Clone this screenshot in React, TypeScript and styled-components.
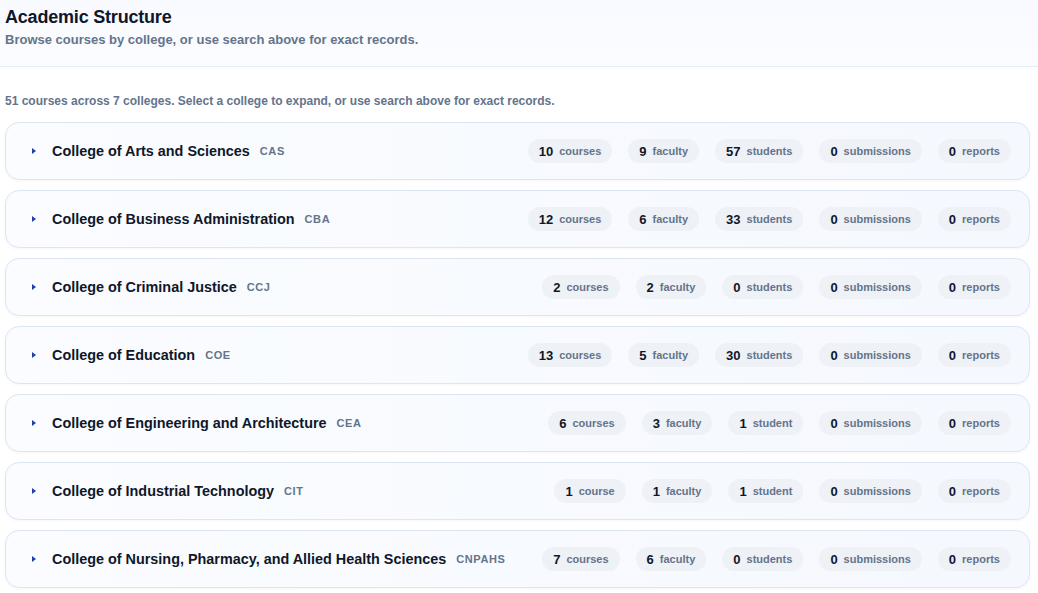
import React from 'react'
import styled, { createGlobalStyle } from 'styled-components'

type College = {
  name: string
  code: string
  courses: number
  faculty: number
  students: number
  submissions: number
  reports: number
}

const COLLEGES: College[] = [
  { name: 'College of Arts and Sciences', code: 'CAS', courses: 10, faculty: 9, students: 57, submissions: 0, reports: 0 },
  { name: 'College of Business Administration', code: 'CBA', courses: 12, faculty: 6, students: 33, submissions: 0, reports: 0 },
  { name: 'College of Criminal Justice', code: 'CCJ', courses: 2, faculty: 2, students: 0, submissions: 0, reports: 0 },
  { name: 'College of Education', code: 'COE', courses: 13, faculty: 5, students: 30, submissions: 0, reports: 0 },
  { name: 'College of Engineering and Architecture', code: 'CEA', courses: 6, faculty: 3, students: 1, submissions: 0, reports: 0 },
  { name: 'College of Industrial Technology', code: 'CIT', courses: 1, faculty: 1, students: 1, submissions: 0, reports: 0 },
  { name: 'College of Nursing, Pharmacy, and Allied Health Sciences', code: 'CNPAHS', courses: 7, faculty: 6, students: 0, submissions: 0, reports: 0 },
]

function plural(count: number, word: string, many?: string) {
  if (count === 1) return word
  return many ?? word + 's'
}

const GlobalStyle = createGlobalStyle`
  body {
    margin: 0;
    background: #ffffff;
    font-family: "Liberation Sans", Arial, sans-serif;
    color: #0f172a;
  }
`

const Stat: React.FC<{ value: number; label: string }> = ({ value, label }) => (
  <Pill>
    <PillValue>{value}</PillValue>
    <PillLabel>{label}</PillLabel>
  </Pill>
)

const App: React.FC = () => {
  const totalCourses = COLLEGES.reduce((sum, c) => sum + c.courses, 0)

  return (
    <>
      <GlobalStyle />
      <Page>
        <Header>
          <Title>Academic Structure</Title>
          <Subtitle>Browse courses by college, or use search above for exact records.</Subtitle>
        </Header>
        <Body>
          <Summary>
            {totalCourses} courses across {COLLEGES.length} colleges. Select a college to expand, or use
            search above for exact records.
          </Summary>
          <List>
            {COLLEGES.map((college) => (
              <Card key={college.code}>
                <Caret viewBox="0 0 4 6" aria-hidden>
                  <path d="M0 0 L4 3 L0 6 Z" fill="#1e40af" />
                </Caret>
                <Name>{college.name}</Name>
                <Code>{college.code}</Code>
                <Stats>
                  <Stat value={college.courses} label={plural(college.courses, 'course')} />
                  <Stat value={college.faculty} label="faculty" />
                  <Stat value={college.students} label={plural(college.students, 'student')} />
                  <Stat value={college.submissions} label={plural(college.submissions, 'submission')} />
                  <Stat value={college.reports} label={plural(college.reports, 'report')} />
                </Stats>
              </Card>
            ))}
          </List>
        </Body>
      </Page>
    </>
  )
}

export default App

const Page = styled.div`
  min-height: 100vh;
`

const Header = styled.header`
  padding: 6px 8px 17px 5px;
  background: linear-gradient(180deg, #f8faff 0%, #fbfcff 100%);
  border-bottom: 1px solid #e6edf6;
`

const Title = styled.h1`
  margin: 0;
  font-size: 18px;
  line-height: 22px;
  font-weight: 700;
  color: #0f172a;
  letter-spacing: -0.2px;
`

const Subtitle = styled.p`
  margin: 3px 0 0;
  font-size: 13px;
  line-height: 18px;
  font-weight: 700;
  color: #64748b;
`

const Body = styled.div`
  padding: 26px 8px 0 5px;
`

const Summary = styled.p`
  margin: 0 0 13px;
  font-size: 12px;
  line-height: 16px;
  font-weight: 700;
  color: #64748b;
`

const List = styled.div`
  display: flex;
  flex-direction: column;
  gap: 10px;
`

const Card = styled.div`
  display: flex;
  align-items: center;
  height: 58px;
  box-sizing: border-box;
  padding: 0 18px 0 26px;
  border: 1px solid #dbe5f3;
  border-radius: 14px;
  background: linear-gradient(90deg, #fafcff 0%, #f5f8fe 100%);
  box-shadow: 0 1px 3px rgba(15, 23, 42, 0.04);
`

const Caret = styled.svg`
  width: 4px;
  height: 6px;
  flex: none;
  margin-right: 16px;
`

const Name = styled.span`
  font-size: 14.4px;
  font-weight: 700;
  color: #0f172a;
`

const Code = styled.span`
  margin-left: 10px;
  font-size: 11px;
  font-weight: 700;
  letter-spacing: 0.6px;
  color: #64748b;
`

const Stats = styled.div`
  display: flex;
  gap: 16px;
  margin-left: auto;
`

const Pill = styled.span`
  display: inline-flex;
  align-items: center;
  gap: 6px;
  height: 24px;
  padding: 0 11px 0 11px;
  border-radius: 12px;
  background: #eef1f6;
`

const PillValue = styled.span`
  font-size: 13px;
  font-weight: 700;
  color: #0f172a;
`

const PillLabel = styled.span`
  font-size: 11px;
  font-weight: 700;
  color: #64748b;
`
